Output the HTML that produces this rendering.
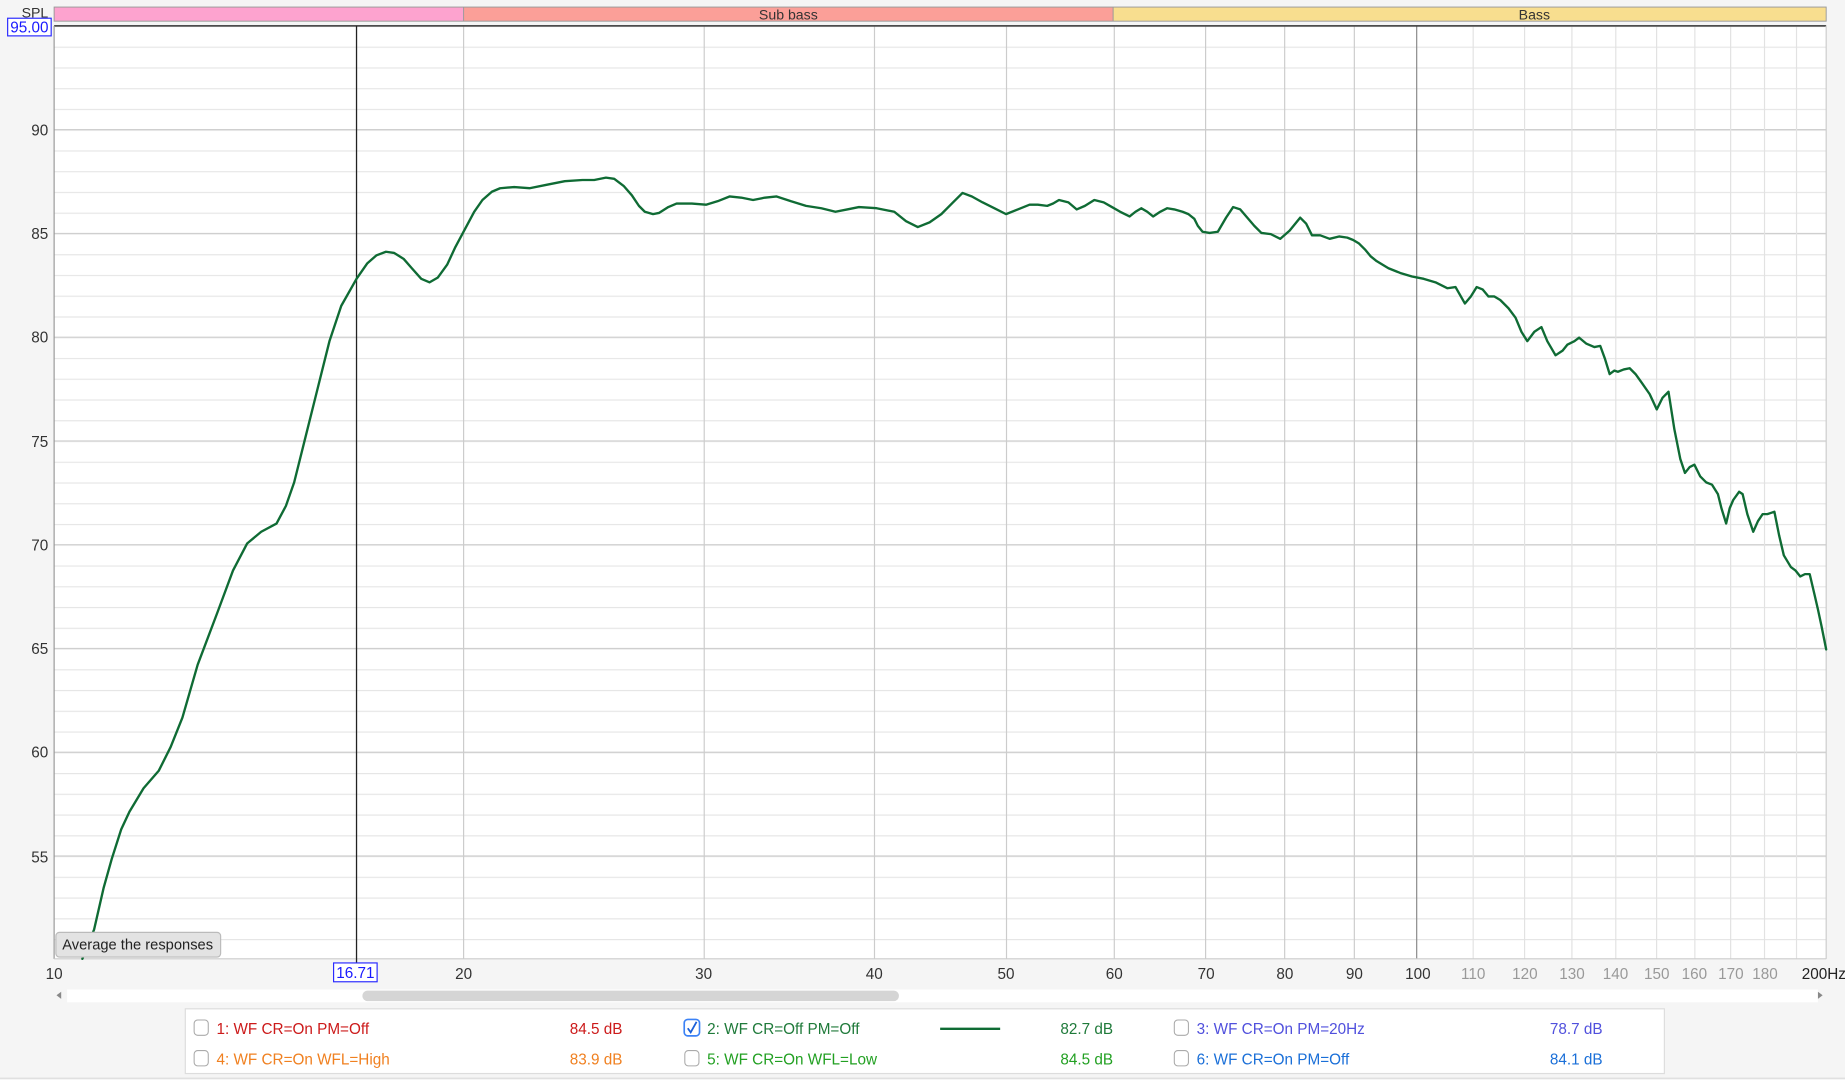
<!DOCTYPE html>
<html><head><meta charset="utf-8"><style>
html,body{margin:0;padding:0;background:#f5f5f5;overflow:hidden}
svg{display:block}
text{font-family:"Liberation Sans",Arial,sans-serif}
</style></head><body>
<svg width="1845" height="1080" viewBox="0 0 1568 918" preserveAspectRatio="none" xmlns="http://www.w3.org/2000/svg">
<defs>
<pattern id="hm" x="0" y="22" width="10" height="17.64" patternUnits="userSpaceOnUse">
<rect x="0" y="0" width="10" height="1" fill="#e6e6e6"/>
</pattern>
</defs>
<rect width="1568" height="918" fill="#f5f5f5"/>
<!-- bands -->
<rect x="46" y="6" width="348" height="12" fill="#fda3cf"/>
<rect x="394" y="6" width="552" height="12" fill="#fb9f98"/>
<rect x="946" y="6" width="606" height="12" fill="#f8de8f"/>
<rect x="46" y="6" width="1506" height="12" fill="none" stroke="#999" stroke-width="0.8"/>
<line x1="394" y1="6" x2="394" y2="18" stroke="#999" stroke-width="0.8"/>
<line x1="946" y1="6" x2="946" y2="18" stroke="#999" stroke-width="0.8"/>
<text x="670" y="16.5" font-size="12" text-anchor="middle" fill="#333">Sub bass</text>
<text x="1304" y="16.5" font-size="12" text-anchor="middle" fill="#333">Bass</text>
<!-- plot -->
<rect x="46" y="22" width="1506" height="793" fill="#fff"/>
<rect x="46" y="22" width="1506" height="793" fill="url(#hm)"/>
<g stroke="#cfcfcf" stroke-width="1">
<line x1="46" x2="1552" y1="110.2" y2="110.2"/><line x1="46" x2="1552" y1="198.4" y2="198.4"/><line x1="46" x2="1552" y1="286.6" y2="286.6"/><line x1="46" x2="1552" y1="374.8" y2="374.8"/><line x1="46" x2="1552" y1="463" y2="463"/><line x1="46" x2="1552" y1="551.2" y2="551.2"/><line x1="46" x2="1552" y1="639.4" y2="639.4"/><line x1="46" x2="1552" y1="727.6" y2="727.6"/>
</g>
<g stroke="#cccccc" stroke-width="1">
<line x1="394" x2="394" y1="22" y2="815"/><line x1="598.5" x2="598.5" y1="22" y2="815"/><line x1="743.2" x2="743.2" y1="22" y2="815"/><line x1="855.4" x2="855.4" y1="22" y2="815"/><line x1="947" x2="947" y1="22" y2="815"/><line x1="1024.6" x2="1024.6" y1="22" y2="815"/><line x1="1091.8" x2="1091.8" y1="22" y2="815"/><line x1="1151" x2="1151" y1="22" y2="815"/>
</g>
<line x1="1204" x2="1204" y1="22" y2="815" stroke="#888" stroke-width="1"/>
<g stroke="#e2e2e2" stroke-width="1">
<line x1="1252" x2="1252" y1="22" y2="815"/><line x1="1295.7" x2="1295.7" y1="22" y2="815"/><line x1="1335.9" x2="1335.9" y1="22" y2="815"/><line x1="1373.2" x2="1373.2" y1="22" y2="815"/><line x1="1407.9" x2="1407.9" y1="22" y2="815"/><line x1="1440.4" x2="1440.4" y1="22" y2="815"/><line x1="1470.8" x2="1470.8" y1="22" y2="815"/><line x1="1499.6" x2="1499.6" y1="22" y2="815"/><line x1="1526.8" x2="1526.8" y1="22" y2="815"/>
</g>
<line x1="46" y1="22" x2="1552" y2="22" stroke="#333" stroke-width="1.2"/>
<line x1="46" y1="22" x2="46" y2="815" stroke="#999" stroke-width="1"/>
<line x1="1552" y1="22" x2="1552" y2="815" stroke="#ccc" stroke-width="1"/>
<line x1="46" y1="815" x2="1552" y2="815" stroke="#ccc" stroke-width="1"/>
<!-- cursor -->
<line x1="303" y1="22" x2="303" y2="820" stroke="#222" stroke-width="1.1"/>
<!-- curve -->
<polyline fill="none" stroke="#0f6b34" stroke-width="2" stroke-linejoin="round" stroke-linecap="round" points="70,815 80,790 88,755 95,730 103,705 110,690 122,670 135,655 145,635 155,610 168,565 185,520 198,485 210,462 222,452 235,445 243,430 250,410 260,370 270,330 280,290 290,260 303,237 312,224 320,217 328,214 335,215 343,220 350,228 358,237 365,240 372,236 380,225 387,210 395,195 403,180 410,170 418,163 425,160 437,159 450,160 465,157 480,154 495,153 505,153 515,151 522,152 530,158 537,166 543,175 548,180 555,182 560,181 568,176 575,173 588,173 600,174 610,171 620,167 630,168 640,170 650,168 660,167 672,171 685,175 698,177 710,180 720,178 730,176 745,177 760,180 770,188 780,193 790,189 800,182 810,172 818,164 826,167 835,172 845,177 855,182 865,178 875,174 882,174 890,175 895,173 900,170 908,172 915,178 922,175 930,170 938,172 945,176 952,180 960,184 965,180 970,177 975,180 980,184 986,180 992,177 998,178 1005,180 1010,182 1015,186 1018,192 1022,197 1028,198 1035,197 1042,185 1048,176 1054,178 1060,185 1066,192 1072,198 1080,199 1088,203 1096,196 1105,185 1110,190 1115,200 1122,200 1130,203 1138,201 1145,202 1150,204 1155,207 1160,212 1165,218 1170,222 1180,228 1190,232 1200,235 1210,237 1220,240 1230,245 1237,244 1245,258 1250,252 1255,244 1260,246 1265,252 1270,252 1275,255 1282,262 1288,270 1293,282 1298,290 1304,282 1310,278 1315,290 1322,302 1328,298 1332,293 1338,290 1342,287 1348,292 1355,295 1360,294 1364,305 1368,318 1372,315 1375,316 1380,314 1385,313 1390,318 1395,325 1402,335 1408,348 1413,338 1418,333 1423,365 1428,390 1432,402 1436,397 1440,395 1445,405 1450,410 1455,412 1460,420 1463,432 1467,445 1470,432 1473,425 1478,418 1481,420 1485,437 1490,452 1494,443 1498,437 1502,437 1505,436 1508,435 1512,455 1516,472 1522,482 1526,485 1530,490 1534,488 1538,488 1542,505 1545,518 1548,532 1552,552"/>
<!-- y labels -->
<g font-size="13" fill="#333" text-anchor="end">
<text x="41" y="115">90</text><text x="41" y="203">85</text><text x="41" y="291">80</text><text x="41" y="380">75</text><text x="41" y="468">70</text><text x="41" y="556">65</text><text x="41" y="644">60</text><text x="41" y="733">55</text>
</g>
<text x="41" y="15" font-size="12" fill="#333" text-anchor="end">SPL</text>
<rect x="6.5" y="15.5" width="37" height="15" fill="#fff" stroke="#2a2aff" stroke-width="1"/>
<text x="25" y="27.5" font-size="13" fill="#1a1aff" text-anchor="middle">95.00</text>
<!-- button -->
<rect x="47.5" y="792.5" width="140" height="21" rx="3" fill="#e3e3e3" stroke="#bbb"/>
<text x="117" y="807" font-size="12.5" fill="#222" text-anchor="middle">Average the responses</text>
<!-- x labels -->
<g font-size="13" fill="#333" text-anchor="middle">
<text x="46" y="832">10</text><text x="394" y="832">20</text><text x="598" y="832">30</text><text x="743" y="832">40</text><text x="855" y="832">50</text><text x="947" y="832">60</text><text x="1025" y="832">70</text><text x="1092" y="832">80</text><text x="1151" y="832">90</text><text x="1205" y="832">100</text>
</g>
<g font-size="13" fill="#999" text-anchor="middle">
<text x="1252" y="832">110</text><text x="1296" y="832">120</text><text x="1336" y="832">130</text><text x="1373" y="832">140</text><text x="1408" y="832">150</text><text x="1440" y="832">160</text><text x="1471" y="832">170</text><text x="1500" y="832">180</text>
</g>
<text x="1550" y="832" font-size="13" fill="#222" text-anchor="middle">200Hz</text>
<rect x="283.5" y="818.5" width="37" height="16" fill="#fff" stroke="#2a2aff"/>
<text x="302" y="831.5" font-size="13" fill="#1a1aff" text-anchor="middle">16.71</text>
<!-- scrollbar -->
<rect x="57" y="841" width="1488" height="11" fill="#fff"/>
<rect x="308" y="842" width="456" height="9" rx="4.5" fill="#d5d5d5"/>
<polygon points="48,846 52,843 52,849" fill="#888"/>
<polygon points="1549,846 1545,843 1545,849" fill="#888"/>
<!-- legend -->
<rect x="157.5" y="857.5" width="1257" height="55" fill="#fff" stroke="#ddd"/>
<g fill="#fff" stroke="#aaa" stroke-width="0.9">
<rect x="165" y="867" width="12" height="13" rx="3"/><rect x="165" y="893" width="12" height="13" rx="3"/>
<rect x="582" y="893" width="12" height="13" rx="3"/>
<rect x="998" y="867" width="12" height="13" rx="3"/><rect x="998" y="893" width="12" height="13" rx="3"/>
</g>
<rect x="581.5" y="866.5" width="13" height="14" rx="3" fill="#fff" stroke="#3b82f6" stroke-width="1.4"/>
<path d="M584.5 874 L587 877.5 L592 868.5" fill="none" stroke="#1a5fd8" stroke-width="1.5"/>
<g font-size="13">
<text x="184" y="879" fill="#cc1a1a">1: WF CR=On PM=Off</text>
<text x="529" y="879" fill="#cc1a1a" text-anchor="end">84.5 dB</text>
<text x="184" y="905" fill="#f08020">4: WF CR=On WFL=High</text>
<text x="529" y="905" fill="#f08020" text-anchor="end">83.9 dB</text>
<text x="601" y="879" fill="#1f7a3a">2: WF CR=Off PM=Off</text>
<text x="946" y="879" fill="#1f7a3a" text-anchor="end">82.7 dB</text>
<text x="601" y="905" fill="#22a022">5: WF CR=On WFL=Low</text>
<text x="946" y="905" fill="#22a022" text-anchor="end">84.5 dB</text>
<text x="1017" y="879" fill="#5050dd">3: WF CR=On PM=20Hz</text>
<text x="1362" y="879" fill="#5050dd" text-anchor="end">78.7 dB</text>
<text x="1017" y="905" fill="#1a6fd8">6: WF CR=On PM=Off</text>
<text x="1362" y="905" fill="#1a6fd8" text-anchor="end">84.1 dB</text>
</g>
<line x1="799" y1="874.5" x2="850" y2="874.5" stroke="#0f6b34" stroke-width="2"/>
<line x1="0" y1="916.5" x2="1568" y2="916.5" stroke="#ddd"/>
</svg>
</body></html>
